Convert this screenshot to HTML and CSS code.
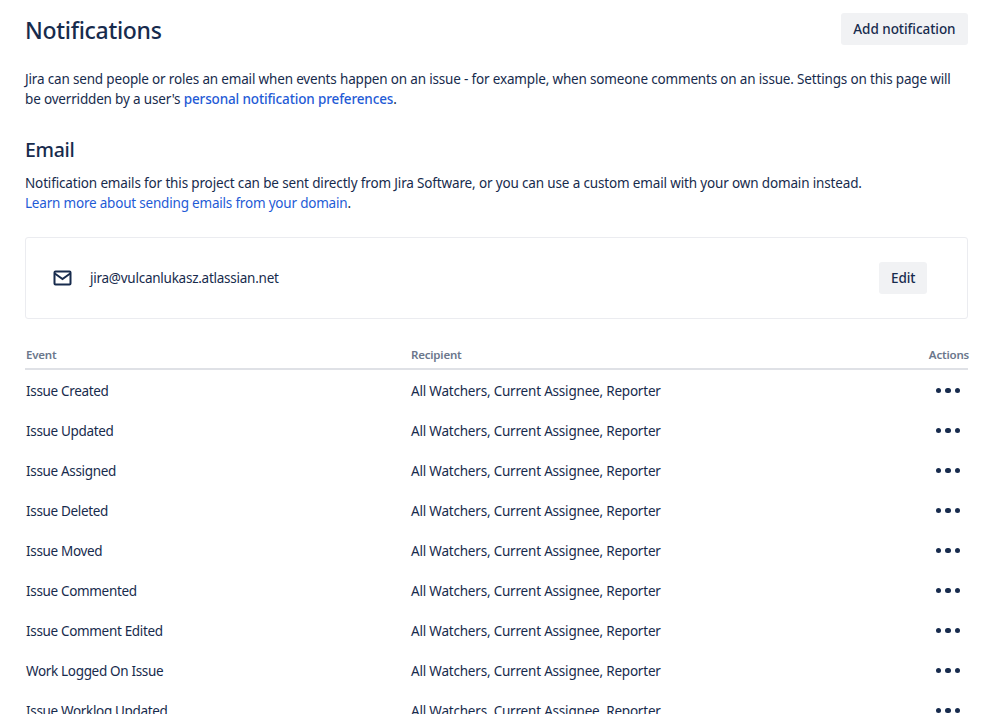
FILE: index.html
```html
<!DOCTYPE html>
<html lang="en">
<head>
<meta charset="utf-8">
<title>Notifications</title>
<link rel="stylesheet" href="styles.css">
</head>
<body>
<main class="page">
  <header class="page-head">
    <h1 class="title">Notifications</h1>
    <button class="btn btn-add">Add notification</button>
  </header>
  <p class="intro">Jira can send people or roles an email when events happen on an issue - for example, when someone comments on an issue. Settings on this page will<br>be overridden by a user's <a class="link link-strong" href="#">personal notification preferences</a>.</p>
  <h2 class="subtitle">Email</h2>
  <p class="desc">Notification emails for this project can be sent directly from Jira Software, or you can use a custom email with your own domain instead.<br><a class="link" href="#">Learn more about sending emails from your domain</a>.</p>
  <section class="email-card">
    <svg class="mail-icon" width="24" height="24" viewBox="0 0 24 24"><path fill="none" stroke="#172b4d" stroke-width="2" stroke-linejoin="round" d="M4.500 5.500h14a1 1 0 0 1 1 1v11a1 1 0 0 1-1 1h-14a1 1 0 0 1-1-1v-11a1 1 0 0 1 1-1z"/><path fill="none" stroke="#172b4d" stroke-width="2" d="M3.800 7.500 11.500 13l7.700-5.500"/></svg>
    <span class="email-addr">jira@vulcanlukasz.atlassian.net</span>
    <button class="btn btn-edit">Edit</button>
  </section>
  <div class="table">
    <div class="row row-head"><span>Event</span><span>Recipient</span><span class="col-actions">Actions</span></div>
    <div class="row"><span class="event">Issue Created</span><span>All Watchers, Current Assignee, Reporter</span><span class="dots"><i></i><i></i><i></i></span></div>
    <div class="row"><span class="event">Issue Updated</span><span>All Watchers, Current Assignee, Reporter</span><span class="dots"><i></i><i></i><i></i></span></div>
    <div class="row"><span class="event">Issue Assigned</span><span>All Watchers, Current Assignee, Reporter</span><span class="dots"><i></i><i></i><i></i></span></div>
    <div class="row"><span class="event">Issue Deleted</span><span>All Watchers, Current Assignee, Reporter</span><span class="dots"><i></i><i></i><i></i></span></div>
    <div class="row"><span class="event">Issue Moved</span><span>All Watchers, Current Assignee, Reporter</span><span class="dots"><i></i><i></i><i></i></span></div>
    <div class="row"><span class="event">Issue Commented</span><span>All Watchers, Current Assignee, Reporter</span><span class="dots"><i></i><i></i><i></i></span></div>
    <div class="row"><span class="event">Issue Comment Edited</span><span>All Watchers, Current Assignee, Reporter</span><span class="dots"><i></i><i></i><i></i></span></div>
    <div class="row"><span class="event">Work Logged On Issue</span><span>All Watchers, Current Assignee, Reporter</span><span class="dots"><i></i><i></i><i></i></span></div>
    <div class="row"><span class="event">Issue Worklog Updated</span><span>All Watchers, Current Assignee, Reporter</span><span class="dots"><i></i><i></i><i></i></span></div>
  </div>
</main>
</body>
</html>
```

FILE: styles.css
```css
html, body { margin: 0; padding: 0; height: 714px; overflow: hidden; background: #fff; }
body { font-family: "Noto Sans", "Open Sans", sans-serif; font-size: 13.5px; letter-spacing: -0.2px; line-height: 20px; color: #172b4d; }
.page { padding: 13px 31px 0 25px; }
.page-head { display: flex; justify-content: space-between; align-items: flex-start; height: 32px; }
.title { margin: 0; font-size: 23px; line-height: 35px; font-weight: 500; letter-spacing: -0.3px; }
.btn { border: 0; border-radius: 3px; background: #f1f2f4; color: #172b4d; font: 500 13.5px/32px "Noto Sans", sans-serif; letter-spacing: -0.05px; height: 32px; padding: 0 12.5px; }
.intro { margin: 24px 0 0; letter-spacing: -0.17px; }
.link { color: #1f5bd6; text-decoration: none; letter-spacing: -0.2px; }
.link-strong { font-weight: 500; letter-spacing: -0.14px; }
.subtitle { margin: 29px 0 0; font-size: 19.5px; line-height: 24px; font-weight: 500; letter-spacing: -0.3px; }
.desc { margin: 11px 0 0; letter-spacing: -0.15px; }
.email-card { display: flex; align-items: center; height: 80px; margin-top: 24px; padding: 0 40px 0 25px; border: 1px solid #ebecf0; border-radius: 3px; }
.mail-icon { flex: none; }
.email-addr { margin-left: 15px; letter-spacing: -0.25px; }
.btn-edit { margin-left: auto; padding: 0 11.5px; }
.table { margin-top: 24px; }
.row { display: grid; grid-template-columns: 385px 1fr 60px; box-sizing: border-box; height: 40px; padding: 2px 0 0 1px; align-items: center; }
.event { letter-spacing: -0.33px; }
.row-head { height: 27px; padding: 0 0 3px 1px; align-items: end; border-bottom: 2px solid #dfe1e6; color: #6b778c; font-size: 11.5px; font-weight: 600; line-height: 20px; }
.col-actions { text-align: right; margin-right: -1px; }
.dots { display: flex; justify-content: flex-end; gap: 4px; padding: 0 8px 1px 0; }
.dots i { width: 5.5px; height: 5.5px; border-radius: 50%; background: #172b4d; }
```
